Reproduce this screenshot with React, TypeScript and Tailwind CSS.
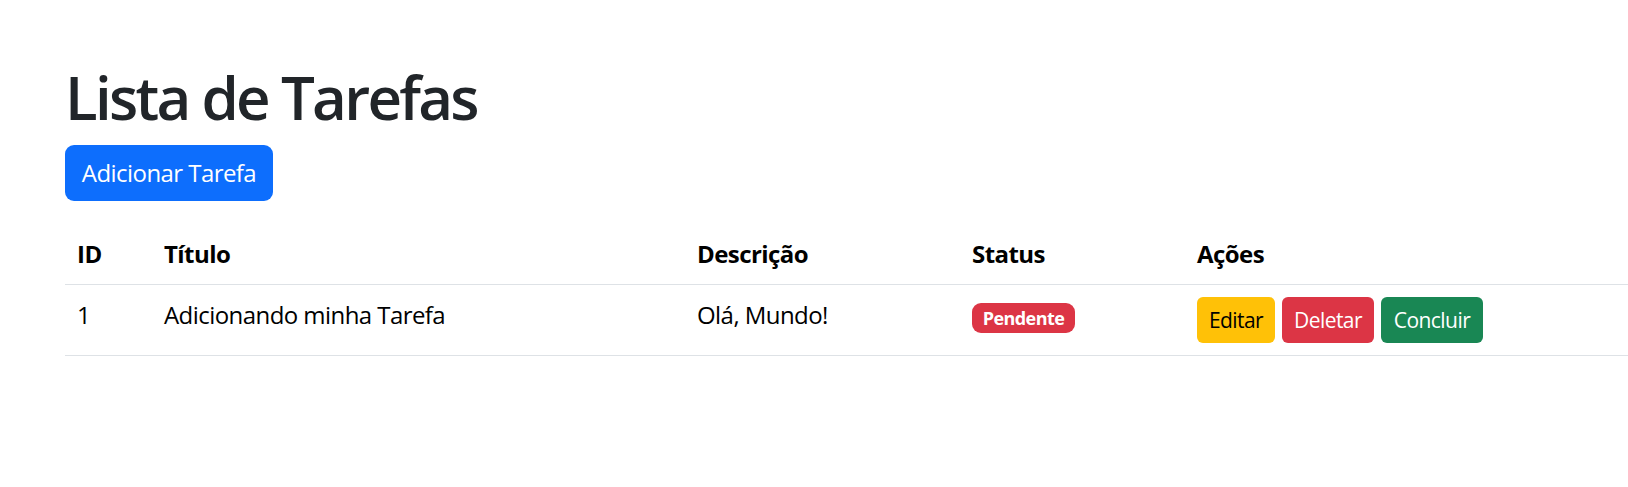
import React from 'react';

type Task = {
  id: number;
  title: string;
  description: string;
  done: boolean;
};

const tasks: Task[] = [
  { id: 1, title: 'Adicionando minha Tarefa', description: 'Olá, Mundo!', done: false },
];

const App: React.FC = () => {
  return (
    <div
      className="min-h-[487px] w-full bg-white pl-[65px] pt-[61px] tracking-[-0.035em] text-black"
      style={{ fontFamily: '"Open Sans", "Noto Sans", sans-serif' }}
    >
      <h1 className="mb-[12px] text-[60px] leading-[72px] font-semibold tracking-[-0.045em] text-[#212529]">
        Lista de Tarefas
      </h1>

      <button className="flex h-[56px] w-[208px] items-center justify-center rounded-[9px] bg-[#0d6efd] text-[24px] text-white">
        Adicionar Tarefa
      </button>

      <table className="mt-[23px] w-full table-fixed border-collapse text-[24px] leading-[36px]">
        <colgroup>
          <col className="w-[87px]" />
          <col className="w-[533px]" />
          <col className="w-[275px]" />
          <col className="w-[225px]" />
          <col />
        </colgroup>
        <thead>
          <tr className="border-b border-[#dee2e6]">
            <th className="p-[12px] text-left align-top font-bold">ID</th>
            <th className="p-[12px] text-left align-top font-bold">Título</th>
            <th className="p-[12px] text-left align-top font-bold">Descrição</th>
            <th className="p-[12px] text-left align-top font-bold">Status</th>
            <th className="p-[12px] text-left align-top font-bold">Ações</th>
          </tr>
        </thead>
        <tbody>
          {tasks.map((task) => (
            <tr key={task.id} className="border-b border-[#dee2e6]">
              <td className="p-[12px] align-top">{task.id}</td>
              <td className="p-[12px] align-top">{task.title}</td>
              <td className="p-[12px] align-top">{task.description}</td>
              <td className="p-[12px] align-top">
                <span className="mt-[6px] flex h-[30px] w-[103px] items-center justify-center rounded-[9px] bg-[#dc3545] text-[18px] leading-none font-bold text-white">
                  {task.done ? 'Concluída' : 'Pendente'}
                </span>
              </td>
              <td className="p-[12px] align-top">
                <div className="flex gap-[7px]">
                  <button className="flex h-[46px] w-[78px] items-center justify-center rounded-[6px] bg-[#ffc107] text-[21px] text-black">
                    Editar
                  </button>
                  <button className="flex h-[46px] w-[92px] items-center justify-center rounded-[6px] bg-[#dc3545] text-[21px] text-white">
                    Deletar
                  </button>
                  <button className="flex h-[46px] w-[102px] items-center justify-center rounded-[6px] bg-[#198754] text-[21px] text-white">
                    Concluir
                  </button>
                </div>
              </td>
            </tr>
          ))}
        </tbody>
      </table>
    </div>
  );
};

export default App;
